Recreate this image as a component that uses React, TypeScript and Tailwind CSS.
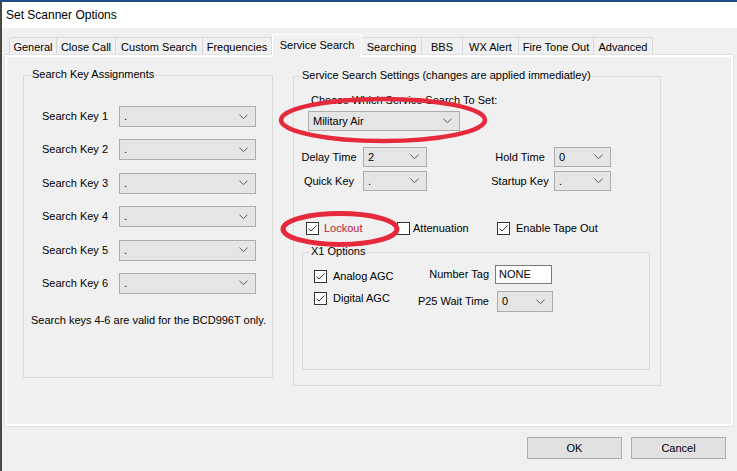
import React from "react";

function Chevron() {
  return (
    <svg width="9" height="6" viewBox="0 0 9 6" className="shrink-0">
      <polyline points="0.5,0.8 4.5,4.6 8.5,0.8" fill="none" stroke="#5a5a5a" strokeWidth="1" />
    </svg>
  );
}

function Combo({ cls, v }: { cls: string; v: string }) {
  return (
    <div className={"flex items-center justify-between border border-[#acacac] bg-[#e5e5e5] pl-[4px] pr-[7px] " + cls}>
      <span>{v}</span>
      <Chevron />
    </div>
  );
}

function Check({ checked = true }: { checked?: boolean }) {
  return (
    <div className="w-[13px] h-[13px] border border-[#333333] bg-white shrink-0 flex items-center justify-center">
      {checked && (
        <svg width="11" height="11" viewBox="0 0 11 11">
          <polyline points="1.5,5.5 4,8 9.5,2.5" fill="none" stroke="#333333" strokeWidth="1" />
        </svg>
      )}
    </div>
  );
}

function Tab({ label, cls, active = false }: { label: string; cls: string; active?: boolean }) {
  if (active)
    return (
      <div className={"relative z-10 -mb-[2px] h-[23px] flex items-center justify-center bg-[#f0f0f0] border border-b-0 border-white " + cls}>
        <span className="-mt-[2px]">{label}</span>
      </div>
    );
  return (
    <div className={"h-[18px] flex items-center justify-center pt-[2px] border border-b-0 border-l-0 border-[#d9d9d9] bg-[#f0f0f0] first:border-l " + cls}>
      {label}
    </div>
  );
}

function KeyRow({ n }: { n: number }) {
  return (
    <div className="flex items-center h-[21px]">
      <div className="w-[77px]">Search Key {n}</div>
      <Combo cls="w-[137px] h-[21px]" v="." />
    </div>
  );
}

export default function App() {
  return (
    <div className="relative w-[737px] h-[471px] overflow-hidden bg-[#f0f0f0] text-black text-[11px] leading-[13px] font-['Liberation_Sans',Arial,sans-serif]">
      <div className="h-[2px] bg-[#1c4f82]" />
      <div className="flex h-[469px]">
        <div className="w-[2px] bg-[#4a4940]" />
        <div className="flex-1 flex flex-col">
          {/* title */}
          <div className="h-[26px] bg-white flex items-center pl-[4px] text-[12px]">Set Scanner Options</div>

          {/* tabs */}
          <div className="h-[27px] flex items-end pl-[7px]">
            <Tab label="General" cls="w-[48px]" />
            <Tab label="Close Call" cls="w-[59px]" />
            <Tab label="Custom Search" cls="w-[87px]" />
            <Tab label="Frequencies" cls="w-[69px]" />
            <Tab label="Service Search" cls="w-[90px]" active />
            <Tab label="Searching" cls="w-[60px]" />
            <Tab label="BBS" cls="w-[41px]" />
            <Tab label="WX Alert" cls="w-[56px]" />
            <Tab label="Fire Tone Out" cls="w-[75px]" />
            <Tab label="Advanced" cls="w-[59px]" />
          </div>

          {/* panel */}
          <div className="ml-[3px] w-[728px] h-[371px] border-2 border-white shadow-[0_0_0_1px_#e2e2e2] flex pl-[16px] pt-[18px]">
            {/* left group */}
            <div className="relative w-[250px] h-[303px] border border-[#dcdcdc] flex flex-col">
              <div className="absolute -top-[8px] left-[7px] px-[1px] bg-[#f0f0f0]">Search Key Assignments</div>
              <div className="flex flex-col gap-[12.4px] pt-[30px] pl-[18px]">
                <KeyRow n={1} />
                <KeyRow n={2} />
                <KeyRow n={3} />
                <KeyRow n={4} />
                <KeyRow n={5} />
                <KeyRow n={6} />
              </div>
              <div className="mt-[20px] pl-[7px]">Search keys 4-6 are valid for the BCD996T only.</div>
            </div>

            {/* right group */}
            <div className="relative ml-[20px] mt-[1px] w-[368px] h-[310px] border border-[#dcdcdc] flex flex-col">
              <div className="absolute -top-[8px] left-[7px] px-[1px] bg-[#f0f0f0]">
                Service Search Settings (changes are applied immediatley)
              </div>
              <div className="mt-[16.5px] pl-[17px]">Choose Which Service Search To Set:</div>
              <div className="mt-[4.5px] pl-[14px]">
                <Combo cls="w-[152px] h-[20px]" v="Military Air" />
              </div>

              <div className="mt-[16px] flex items-center h-[20px]">
                <div className="ml-[5px] w-[60px] text-center">Delay Time</div>
                <div className="ml-[4px]"><Combo cls="w-[64px] h-[20px]" v="2" /></div>
                <div className="ml-[63px] w-[60px] text-center">Hold Time</div>
                <div className="ml-[4px]"><Combo cls="w-[57px] h-[20px]" v="0" /></div>
              </div>
              <div className="mt-[4px] flex items-center h-[20px]">
                <div className="ml-[5px] w-[60px] text-center">Quick Key</div>
                <div className="ml-[4px]"><Combo cls="w-[64px] h-[20px]" v="." /></div>
                <div className="ml-[63px] w-[60px] text-center">Startup Key</div>
                <div className="ml-[4px]"><Combo cls="w-[57px] h-[20px]" v="." /></div>
              </div>

              <div className="mt-[31px] flex items-center h-[13px] pl-[12px]">
                <div className="w-[91px] flex items-center gap-[5px]">
                  <Check />
                  <span className="text-[#b82532]">Lockout</span>
                </div>
                <div className="w-[100px] flex items-center gap-[3px]">
                  <Check checked={false} />
                  <span>Attenuation</span>
                </div>
                <div className="flex items-center gap-[6px]">
                  <Check />
                  <span>Enable Tape Out</span>
                </div>
              </div>

              {/* X1 options */}
              <div className="relative mt-[17px] ml-[8px] w-[348px] h-[118px] border border-[#dcdcdc] flex">
                <div className="absolute -top-[8px] left-[7px] px-[1px] bg-[#f0f0f0]">X1 Options</div>
                <div className="w-[97px] pl-[11px] pt-[17px] flex flex-col gap-[9px]">
                  <div className="flex items-center gap-[6px] h-[13px]">
                    <Check />
                    <span>Analog AGC</span>
                  </div>
                  <div className="flex items-center gap-[6px] h-[13px]">
                    <Check />
                    <span>Digital AGC</span>
                  </div>
                </div>
                <div className="flex flex-col pt-[12px]">
                  <div className="flex items-center h-[19px]">
                    <div className="w-[89px] text-right">Number Tag</div>
                    <div className="ml-[6px] w-[57px] h-[19px] bg-white border border-[#7a7a7a] flex items-center pl-[3px]">NONE</div>
                  </div>
                  <div className="mt-[7px] flex items-center h-[21px]">
                    <div className="w-[89px] text-right">P25 Wait Time</div>
                    <div className="ml-[8px]"><Combo cls="w-[56px] h-[21px]" v="0" /></div>
                  </div>
                </div>
              </div>
            </div>
          </div>

          {/* buttons */}
          <div className="mt-[11px] flex justify-end gap-[9px] pr-[11px]">
            <div className="w-[95px] h-[22px] bg-[#e1e1e1] border border-[#adadad] flex items-center justify-center">OK</div>
            <div className="w-[95px] h-[22px] bg-[#e1e1e1] border border-[#adadad] flex items-center justify-center">Cancel</div>
          </div>
        </div>
      </div>

      {/* red annotation ellipses */}
      <svg className="absolute inset-0 pointer-events-none" width="737" height="471" viewBox="0 0 737 471">
        <ellipse cx="383" cy="120" rx="102" ry="21" fill="none" stroke="#e62a3c" strokeWidth="4.5" />
        <ellipse cx="340" cy="229" rx="57" ry="15.5" fill="none" stroke="#e62a3c" strokeWidth="5" />
      </svg>
    </div>
  );
}
